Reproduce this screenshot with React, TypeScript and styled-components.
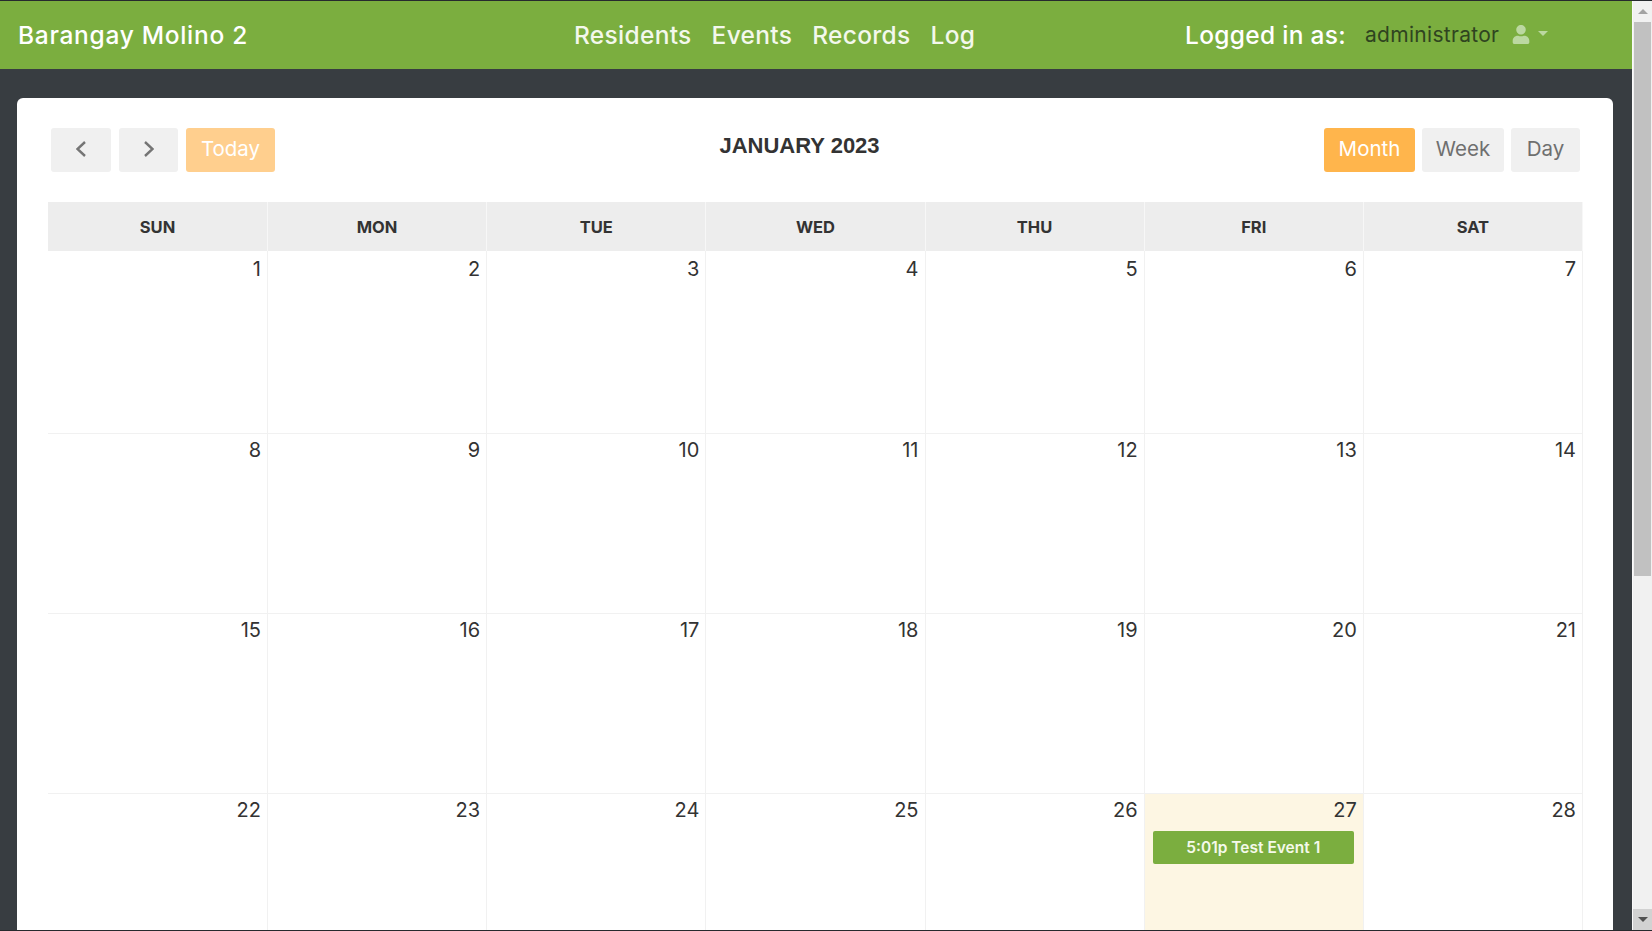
import React from "react";
import styled, { createGlobalStyle } from "styled-components";
import { FaUser } from "react-icons/fa";

const GlobalStyle = createGlobalStyle`
  html, body { margin: 0; padding: 0; height: 100%; overflow: hidden; background: #383d41; }
  * { box-sizing: border-box; }
  body { font-family: "Inter", "Open Sans", sans-serif; color: #333; }
`;

const Frame = styled.div`
  height: 931px;
  width: 1652px;
  display: flex;
  border-top: 1px solid #262a2e;
  border-bottom: 1px solid #262a2e;
  overflow: hidden;
`;

const Page = styled.div`
  flex: 1;
  min-width: 0;
  display: flex;
  flex-direction: column;
  background: #383d41;
  overflow: hidden;
`;

const Navbar = styled.header`
  flex: none;
  height: 68px;
  background: #7bae3f;
  display: flex;
  align-items: center;
  padding: 0 0 0 18px;
  color: #fff;
  font-size: 24.5px;
  font-weight: 500;
`;

const Brand = styled.div`
  width: 556px;
  letter-spacing: 0.7px;
`;

const Nav = styled.nav`
  display: flex;
  gap: 20px;
  width: 611px;
  letter-spacing: 0.3px;
`;

const NavLink = styled.span`
  color: #f3f8ec;
`;

const UserArea = styled.div`
  display: flex;
  align-items: center;
  letter-spacing: 0.3px;
`;

const UserName = styled.span`
  margin-left: 19px;
  font-size: 21px;
  font-weight: 400;
  color: #2f4420;
  position: relative;
  top: -1px;
`;

const UserIcon = styled(FaUser)`
  margin-left: 13px;
  width: 18px;
  height: 19px;
  color: #bcd8a1;
  position: relative;
  top: -1px;
`;

const Caret = styled.span`
  margin-left: 8px;
  width: 0;
  height: 0;
  border-left: 5px solid transparent;
  border-right: 5px solid transparent;
  border-top: 5px solid #bcd8a1;
  position: relative;
  top: -2px;
`;

const Card = styled.main`
  flex: 1;
  margin: 29px 19px 0 17px;
  padding: 30px 30px 0 31px;
  background: #fff;
  border-radius: 6px 6px 0 0;
  overflow: hidden;
`;

const Toolbar = styled.div`
  display: flex;
  justify-content: space-between;
  align-items: flex-start;
  margin: 0 3px 30px 3px;
  height: 44px;
`;

const ButtonGroup = styled.div<{ $gap: number }>`
  display: flex;
  gap: ${(p) => p.$gap}px;
`;

const ToolButton = styled.button<{ $w: number; $variant?: "active" | "faded" }>`
  width: ${(p) => p.$w}px;
  height: 44px;
  padding: 0 0 3px;
  border: none;
  border-radius: 3px;
  display: flex;
  align-items: center;
  justify-content: center;
  font-family: inherit;
  font-size: 20.5px;
  font-weight: 400;
  background: ${(p) =>
    p.$variant === "active" ? "#ffb54c" : p.$variant === "faded" ? "#ffcf8e" : "#f0f0f0"};
  color: ${(p) => (p.$variant ? "#fff" : "#6f6f6f")};
`;

const Title = styled.h2`
  margin: 5px 0 0;
  font-family: "Liberation Sans", Arial, sans-serif;
  font-size: 22px;
  line-height: 26px;
  font-weight: 700;
  color: #333;
`;

const Calendar = styled.div`
  width: 1535px;
  display: grid;
  grid-template-columns: 220px repeat(6, 1fr);
  grid-template-rows: 49px 182.5px repeat(3, 180.4px);
`;

const HeadCell = styled.div`
  background: #ededed;
  border-right: 1px solid #f7f7f7;
  display: flex;
  align-items: center;
  justify-content: center;
  font-size: 16.5px;
  font-weight: 700;
  color: #333;
  &:last-child { border-right: none; }
`;

const DayCell = styled.div<{ $today?: boolean; $firstRow?: boolean }>`
  padding: ${(p) => (p.$firstRow ? "5px" : "3px")} 6px 0 8px;
  background: ${(p) => (p.$today ? "#fdf6e3" : "#fff")};
  border-bottom: 1px solid #f1f1f1;
  border-right: 1px solid #f1f1f1;
`;

const DayNumber = styled.div`
  text-align: right;
  font-size: 20px;
  line-height: 26px;
  color: #333;
`;

const EventChip = styled.div`
  margin: 8px 3px 0 0;
  height: 33px;
  background: #7bae3f;
  border-radius: 2px;
  display: flex;
  align-items: center;
  justify-content: center;
  color: #f4f9ea;
  font-size: 15.5px;
  font-weight: 600;
`;

const Scrollbar = styled.aside`
  flex: none;
  width: 20px;
  display: flex;
  flex-direction: column;
  background: #f1f1f1;
  border-left: 1px solid #fafafa;
`;

const ScrollButton = styled.div<{ $down?: boolean }>`
  flex: none;
  height: ${(p) => (p.$down ? "21px" : "20px")};
  display: flex;
  align-items: center;
  justify-content: center;
  background: ${(p) => (p.$down ? "#d2d2d2" : "#f1f1f1")};
`;

const ScrollArrow = styled.span<{ $down?: boolean }>`
  width: 0;
  height: 0;
  border-left: 5px solid transparent;
  border-right: 5px solid transparent;
  ${(p) =>
    p.$down ? "border-top: 5px solid #505050;" : "border-bottom: 5px solid #a3a3a3;"}
`;

const Track = styled.div`
  flex: 1;
  padding: 1px 1px 0 1px;
`;

const Thumb = styled.div`
  height: 554px;
  background: #c1c1c1;
`;

const Chevron = ({ left }: { left?: boolean }) => (
  <svg width="14" height="18" viewBox="0 0 14 18" fill="none">
    <path
      d={left ? "M11 2 L3.5 9 L11 16" : "M3 2 L10.5 9 L3 16"}
      stroke="#757575"
      strokeWidth="2.4"
    />
  </svg>
);

const days = ["SUN", "MON", "TUE", "WED", "THU", "FRI", "SAT"];
const dates = Array.from({ length: 28 }, (_, i) => i + 1);

export default function App() {
  return (
    <>
      <GlobalStyle />
      <Frame>
        <Page>
          <Navbar>
            <Brand>Barangay Molino 2</Brand>
            <Nav>
              <NavLink>Residents</NavLink>
              <NavLink>Events</NavLink>
              <NavLink>Records</NavLink>
              <NavLink>Log</NavLink>
            </Nav>
            <UserArea>
              <span>Logged in as:</span>
              <UserName>administrator</UserName>
              <UserIcon />
              <Caret />
            </UserArea>
          </Navbar>
          <Card>
            <Toolbar>
              <ButtonGroup $gap={8}>
                <ToolButton $w={60} aria-label="Previous">
                  <Chevron left />
                </ToolButton>
                <ToolButton $w={59} aria-label="Next">
                  <Chevron />
                </ToolButton>
                <ToolButton $w={89} $variant="faded">
                  Today
                </ToolButton>
              </ButtonGroup>
              <Title>JANUARY 2023</Title>
              <ButtonGroup $gap={7}>
                <ToolButton $w={91} $variant="active">
                  Month
                </ToolButton>
                <ToolButton $w={82}>Week</ToolButton>
                <ToolButton $w={69}>Day</ToolButton>
              </ButtonGroup>
            </Toolbar>
            <Calendar>
              {days.map((d) => (
                <HeadCell key={d}>{d}</HeadCell>
              ))}
              {dates.map((n) => (
                <DayCell key={n} $today={n === 27} $firstRow={n <= 7}>
                  <DayNumber>{n}</DayNumber>
                  {n === 27 && <EventChip>5:01p Test Event 1</EventChip>}
                </DayCell>
              ))}
            </Calendar>
          </Card>
        </Page>
        <Scrollbar>
          <ScrollButton>
            <ScrollArrow />
          </ScrollButton>
          <Track>
            <Thumb />
          </Track>
          <ScrollButton $down>
            <ScrollArrow $down />
          </ScrollButton>
        </Scrollbar>
      </Frame>
    </>
  );
}
